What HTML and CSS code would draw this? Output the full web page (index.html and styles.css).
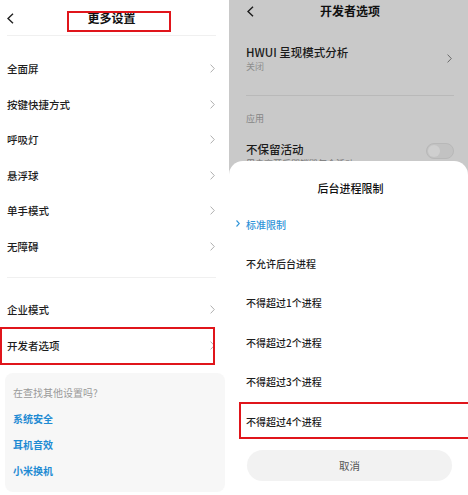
FILE: index.html
```html
<!DOCTYPE html>
<html lang="zh-CN">
<head>
<meta charset="utf-8">
<title>更多设置 / 开发者选项</title>
<link rel="stylesheet" href="styles.css">
</head>
<body>
<div class="screens">
  <section class="left">
    <header class="nav">
      <svg class="back" viewBox="0 0 7 11" width="7" height="11"><polyline points="6,0.7 1,5.5 6,10.3" fill="none" stroke="#222" stroke-width="1.4"/></svg>
      <h1 class="nav-title">更多设置</h1>
      <span></span>
    </header>
    <ul class="list list-first">
      <li class="row"><span>全面屏</span><svg class="chev" viewBox="0 0 5 9" width="5" height="9"><polyline points="0.6,0.6 4.3,4.5 0.6,8.4" fill="none" stroke="#b0b0b0" stroke-width="1"/></svg></li>
      <li class="row"><span>按键快捷方式</span><svg class="chev" viewBox="0 0 5 9" width="5" height="9"><polyline points="0.6,0.6 4.3,4.5 0.6,8.4" fill="none" stroke="#b0b0b0" stroke-width="1"/></svg></li>
      <li class="row"><span>呼吸灯</span><svg class="chev" viewBox="0 0 5 9" width="5" height="9"><polyline points="0.6,0.6 4.3,4.5 0.6,8.4" fill="none" stroke="#b0b0b0" stroke-width="1"/></svg></li>
      <li class="row"><span>悬浮球</span><svg class="chev" viewBox="0 0 5 9" width="5" height="9"><polyline points="0.6,0.6 4.3,4.5 0.6,8.4" fill="none" stroke="#b0b0b0" stroke-width="1"/></svg></li>
      <li class="row"><span>单手模式</span><svg class="chev" viewBox="0 0 5 9" width="5" height="9"><polyline points="0.6,0.6 4.3,4.5 0.6,8.4" fill="none" stroke="#b0b0b0" stroke-width="1"/></svg></li>
      <li class="row"><span>无障碍</span><svg class="chev" viewBox="0 0 5 9" width="5" height="9"><polyline points="0.6,0.6 4.3,4.5 0.6,8.4" fill="none" stroke="#b0b0b0" stroke-width="1"/></svg></li>
    </ul>
    <ul class="list list-second">
      <li class="row"><span>企业模式</span><svg class="chev" viewBox="0 0 5 9" width="5" height="9"><polyline points="0.6,0.6 4.3,4.5 0.6,8.4" fill="none" stroke="#b0b0b0" stroke-width="1"/></svg></li>
      <li class="row"><span>开发者选项</span><svg class="chev" viewBox="0 0 5 9" width="5" height="9"><polyline points="0.6,0.6 4.3,4.5 0.6,8.4" fill="none" stroke="#b0b0b0" stroke-width="1"/></svg></li>
    </ul>
    <div class="card">
      <p class="card-q">在查找其他设置吗?</p>
      <a class="card-link">系统安全</a>
      <a class="card-link">耳机音效</a>
      <a class="card-link">小米换机</a>
    </div>
    <div class="mark mark-title"></div>
    <div class="mark mark-dev"></div>
  </section>

  <section class="right">
    <header class="nav nav-r">
      <svg class="back" viewBox="0 0 7 11" width="7" height="11"><polyline points="6,0.7 1,5.5 6,10.3" fill="none" stroke="#1c1c1c" stroke-width="1.4"/></svg>
      <h1 class="nav-title">开发者选项</h1>
      <span></span>
    </header>
    <div class="r-item">
      <div class="r-text">
        <div class="r-title">HWUI 呈现模式分析</div>
        <div class="r-sub">关闭</div>
      </div>
      <svg class="chev" viewBox="0 0 5 9" width="5" height="9"><polyline points="0.6,0.6 4.3,4.5 0.6,8.4" fill="none" stroke="#6a6a6a" stroke-width="1"/></svg>
    </div>
    <div class="r-divider"></div>
    <div class="r-group">应用</div>
    <div class="r-item r-item-toggle">
      <div class="r-text">
        <div class="r-title">不保留活动</div>
        <div class="r-sub r-sub-dark">用户离开后即销毁每个活动</div>
      </div>
      <span class="toggle"><span class="knob"></span></span>
    </div>

    <div class="sheet">
      <div class="sheet-title">后台进程限制</div>
      <ul class="opts">
        <li class="opt opt-on"><svg class="opt-mark" viewBox="0 0 4 7" width="4" height="7"><polyline points="0.5,0.5 3.3,3.5 0.5,6.5" fill="none" stroke="#2f94d8" stroke-width="1.1"/></svg>标准限制</li>
        <li class="opt">不允许后台进程</li>
        <li class="opt">不得超过1个进程</li>
        <li class="opt">不得超过2个进程</li>
        <li class="opt">不得超过3个进程</li>
        <li class="opt">不得超过4个进程</li>
      </ul>
      <button class="cancel">取消</button>
      <div class="mark mark-opt"></div>
    </div>
  </section>
</div>
</body>
</html>
```

FILE: styles.css
```css
* { box-sizing: border-box; }
html, body {
  margin: 0;
  padding: 0;
  width: 468px;
  height: 495px;
  overflow: hidden;
  background: #fff;
  font-family: "Noto Sans CJK SC", "Noto Sans", "Liberation Sans", sans-serif;
  color: #1b1b1b;
}
ul { list-style: none; margin: 0; padding: 0; }
p, h1 { margin: 0; }

.screens {
  display: flex;
  width: 468px;
  height: 495px;
}

/* ---------- left ---------- */
.left {
  position: relative;
  width: 229px;
  flex: none;
  background: #fff;
  padding: 0 13px 0 7px;
}
.nav {
  display: grid;
  grid-template-columns: 20px 1fr 20px;
  align-items: center;
  height: 36px;
  border-bottom: 1px solid #f0f0f0;
}
.back { display: block; margin-top: 1px; }
.nav-title {
  text-align: center;
  font-size: 12px;
  font-weight: 700;
  line-height: 14px;
  margin-top: 0;
  color: #111;
}
.list-first {
  padding: 15px 0 13px;
  border-bottom: 1px solid #f0f0f0;
}
.list-second { padding: 13px 0 10px; }
.row {
  display: flex;
  align-items: center;
  justify-content: space-between;
  height: 35.5px;
  font-size: 10.5px;
  font-weight: 500;
  color: #1d1d1d;
  padding-right: 1px;
}
.list-second .row { height: 36px; }
.chev { display: block; flex: none; }

.card {
  margin: 0 -9px 0 -2px;
  background: #f7f7f7;
  border-radius: 8px;
  padding: 13px 8px 8px;
  height: 119px;
  display: flex;
  flex-direction: column;
}
.card-q {
  font-size: 10px;
  line-height: 14px;
  color: #9a9a9a;
  margin-bottom: 6px;
}
.card-link {
  font-size: 10px;
  font-weight: 700;
  line-height: 26px;
  color: #1f8bd3;
}

.mark {
  position: absolute;
  border: 2px solid #e0151b;
  pointer-events: none;
}
.mark-title { left: 67px; top: 11px; width: 104px; height: 21px; }
.mark-dev { left: 0; top: 327px; width: 215px; height: 38px; }

/* ---------- right ---------- */
.right {
  position: relative;
  flex: 1;
  background: #c9c9c9;
  padding: 0 14px 0 17px;
  overflow: hidden;
}
.nav-r {
  height: 22px;
  border-bottom: none;
}
.nav-r .nav-title { margin-top: 0; font-size: 12px; }
.nav-r .back { margin-left: 1px; margin-top: 0; }

.r-item {
  display: flex;
  align-items: center;
  justify-content: space-between;
  padding-top: 23px;
}
.r-item .chev { margin-right: 2px; margin-top: -1px; }
.r-title {
  font-size: 11.5px;
  line-height: 15px;
  color: #1a1a1a;
  font-weight: 500;
}
.r-sub {
  font-size: 9px;
  line-height: 12px;
  color: #8e8e8e;
  margin-top: 1px;
}
.r-sub-dark { color: #777; }
.r-divider {
  margin: 22px 0 0;
  border-top: 1px solid #b9b9b9;
}
.r-group {
  margin-top: 17px;
  font-size: 9px;
  line-height: 12px;
  color: #858585;
}
.r-item-toggle {
  padding-top: 17px;
  align-items: flex-start;
}
.toggle {
  position: relative;
  display: block;
  width: 28px;
  height: 16px;
  border-radius: 8px;
  background: #c2c2c2;
  border: 1px solid #b8b8b8;
  margin-top: 1px;
}
.knob {
  position: absolute;
  left: 1px;
  top: 1px;
  width: 12px;
  height: 12px;
  border-radius: 50%;
  background: #cfcfcf;
}

.sheet {
  position: absolute;
  left: 0;
  right: 0;
  top: 161px;
  bottom: 0;
  background: #fff;
  border-radius: 14px 14px 0 0;
  padding: 20px 16px 0 17px;
}
.sheet-title {
  text-align: center;
  font-size: 11px;
  line-height: 14px;
  font-weight: 500;
  color: #111;
  padding-left: 3px;
}
.opts { margin-top: 9.5px; }
.opt {
  position: relative;
  height: 39.4px;
  display: flex;
  align-items: center;
  font-size: 10px;
  font-weight: 500;
  color: #1d1d1d;
}
.opt-on { color: #2f94d8; }
.opt-mark {
  position: absolute;
  left: -10px;
  top: 50%;
  margin-top: -4px;
  display: block;
}
.cancel {
  display: block;
  width: 205px;
  height: 31px;
  margin: 9px 0 0 1px;
  border: none;
  border-radius: 16px;
  background: #f2f2f2;
  font-family: inherit;
  font-size: 10.5px;
  color: #555;
}
.mark-opt {
  left: 10px;
  top: 241px;
  width: 240px;
  height: 37px;
}
```
